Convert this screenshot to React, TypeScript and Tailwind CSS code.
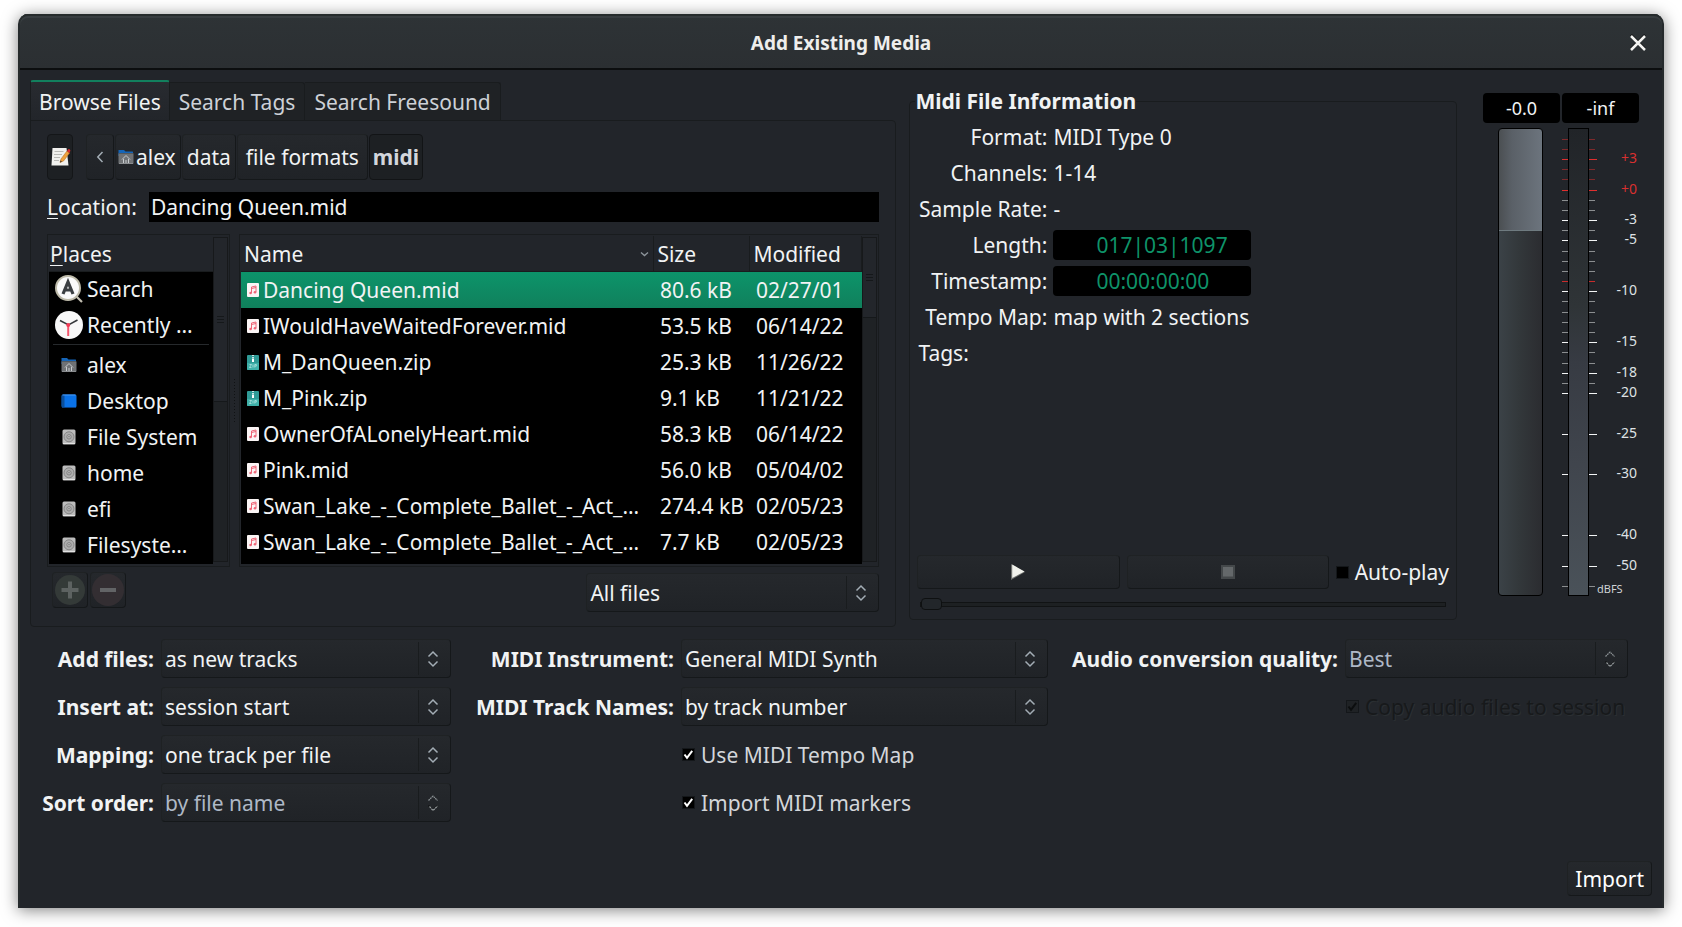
import { useState, type ReactNode } from "react";

const bevel =
  "rounded border border-t-[#1f2224] border-l-[#1e2123] border-r-[#15181a] border-b-[#15181a] bg-linear-to-b from-[#25282c] to-[#202327]";

function UpDown({ disabled }: { disabled?: boolean }) {
  return (
    <svg width="12" height="18" viewBox="0 0 12 18" fill="none" aria-hidden="true">
      {disabled ? (
        <>
          <path d="M1.5 6.500 6 2l4.500 4.500" stroke="#8b9194" strokeWidth="1.200" strokeDasharray="1.800 .6" />
          <path d="M1.500 11.500 6 16l4.500-4.500" stroke="#0f1112" strokeWidth="1.500" />
          <path d="M2.500 12.500 6 16.500 10.500 12" stroke="#969c9f" strokeWidth="1.200" strokeDasharray="2.200 .6" />
        </>
      ) : (
        <path d="M1.500 6.500 6 2l4.500 4.500M1.500 11.500 6 16l4.500-4.500" stroke="#a3adb5" strokeWidth="1.500" />
      )}
    </svg>
  );
}

function Combo({ id, label, options, disabled }: { id: string; label?: string; options: string[]; disabled?: boolean }) {
  return (
    <div className="grid h-[39px] grid-cols-[minmax(0,1fr)_33px]">
      <select
        id={id}
        aria-label={label}
        disabled={disabled}
        className={`${bevel} col-span-2 col-start-1 row-start-1 h-full w-full appearance-none pl-[3px] text-[#f1f3f4] opacity-100 outline-none disabled:text-[#aeb8c6] disabled:opacity-100`}
      >
        {options.map((o) => (
          <option key={o}>{o}</option>
        ))}
      </select>
      <span className="pointer-events-none col-start-2 row-start-1 my-[3px] flex items-center border-l border-[#191c1e] pl-[8px]">
        <UpDown disabled={disabled} />
      </span>
    </div>
  );
}

function Check({ label, checked = false, disabled, dim }: { label: string; checked?: boolean; disabled?: boolean; dim?: boolean }) {
  const [on, setOn] = useState(checked);
  return (
    <label
      className={`flex items-center gap-1.5 ${
        disabled ? "text-[#17191b] [text-shadow:1px_1px_0_#2b2f32]" : dim ? "text-[#d3d6da]" : "text-[#f1f3f4]"
      }`}
    >
      <span className="grid size-[13px] shrink-0">
        <input
          type="checkbox"
          checked={on}
          disabled={disabled}
          onChange={(e) => setOn(e.target.checked)}
          className="col-start-1 row-start-1 size-[13px] appearance-none border border-[#14171a] bg-black disabled:bg-[#1f2225]"
        />
        {on && (
          <svg viewBox="0 0 13 13" className="pointer-events-none col-start-1 row-start-1 size-[13px]" aria-hidden="true">
            <path d="M2.500 6.500 5 9.800 10.200 2.800" fill="none" stroke={disabled ? "#0c0e0f" : "#fff"} strokeWidth="2" />
          </svg>
        )}
      </span>
      {label}
    </label>
  );
}

function HomeFolder() {
  return (
    <svg width="16" height="16" viewBox="0 0 16 16" aria-hidden="true">
      <path d="M.5 1h5.500l1.500 1.500h7q.5 0 .5.500V7H.5z" fill="#1565b8" />
      <rect x=".5" y="4" width="15" height="11" rx="1" fill="#6f7275" />
      <path d="M1 4.500h14" stroke="#55595c" />
      <path d="M1 14.500h14" stroke="#8a8d90" />
      <path d="M4 10.500 8 6.500l4 4M5.500 10v4M10.500 10v4M8 11v3" fill="none" stroke="#c9cccf" />
    </svg>
  );
}

function DesktopIcon() {
  return (
    <svg width="16" height="16" viewBox="0 0 16 16" aria-hidden="true">
      <rect x=".5" y="1.500" width="15" height="13" rx="1.500" fill="#0a72e8" />
      <path d="M1 2h2.500v12H1z" fill="#0b4f9c" />
      <path d="M1.500 2h13" stroke="#4c9af0" />
      <path d="M1 14.500h14" stroke="#0a3f80" />
    </svg>
  );
}

function DriveIcon() {
  return (
    <svg width="16" height="16" viewBox="0 0 16 16" aria-hidden="true">
      <rect x="1.500" y=".5" width="13" height="15" rx="1.500" fill="#bcbcbc" />
      <path d="M2 14.500h12" stroke="#e2e2e2" />
      <circle cx="8" cy="7.800" r="5" fill="#adadad" stroke="#858585" />
      <circle cx="8" cy="7.800" r="2.200" fill="#bdbdbd" stroke="#808080" />
      <circle cx="8" cy="7.800" r=".7" fill="#666" />
    </svg>
  );
}

function SearchPlace() {
  return (
    <svg width="28" height="28" viewBox="0 0 28 28" aria-hidden="true">
      <path d="m21 21 6 6" stroke="#c2bfb2" strokeWidth="2.200" />
      <circle cx="13" cy="13" r="12" fill="#fafafa" stroke="#bdbaa9" strokeWidth="2" />
      <path d="M8 19 13 7l5 12M10 15h6" fill="none" stroke="#3b3f42" strokeWidth="3.200" />
    </svg>
  );
}

function RecentPlace() {
  return (
    <svg width="28" height="28" viewBox="0 0 28 28" aria-hidden="true">
      <circle cx="14" cy="14" r="14" fill="#f8f8f8" />
      <path d="M5 9.500 13.500 14 22.500 9" fill="none" stroke="#34383b" strokeWidth="1.500" />
      <path d="M13.200 13v12" stroke="#f4586f" strokeWidth="2" />
      <circle cx="13.200" cy="14" r="2" fill="#f23a55" />
    </svg>
  );
}

function MidiIcon() {
  return (
    <svg width="12" height="14" viewBox="0 0 12 14" aria-hidden="true">
      <rect width="12" height="14" rx="1" fill="#fbf5f5" />
      <path d="M4.500 10V4l4.500-1v6M4.500 5.500 9 4.500" fill="none" stroke="#ee6678" strokeWidth="1" />
      <circle cx="3.600" cy="10" r="1.300" fill="#ee6678" />
      <circle cx="8" cy="9.200" r="1.300" fill="#ee6678" />
    </svg>
  );
}

function ZipIcon() {
  return (
    <svg width="12" height="15" viewBox="0 0 12 15" aria-hidden="true">
      <rect width="12" height="15" rx="1" fill="#2f9a96" />
      <path d="M0 8h12v6q0 1-1 1H1q-1 0-1-1z" fill="#3fb0a9" />
      <path d="M6 0v3.500" stroke="#fff" strokeDasharray="1 1" strokeWidth="1.500" />
      <rect x="5" y="3.500" width="2" height="3.500" fill="#fff" />
      <path d="M2.500 9.500h2l-2 3h2M6 9.500v3M7.800 12.500v-3h1.500v1.600H8" fill="none" stroke="#b5e6e2" strokeWidth=".8" />
    </svg>
  );
}

function TypeNameIcon() {
  return (
    <svg width="20" height="20" viewBox="0 0 20 20" aria-hidden="true">
      <path d="M1.500 1h14l2 17.500h-17z" fill="#f1f1ee" />
      <path d="M3.500 4.500h9M3 7.500h8M3 10.500h6M3 13.500h5" stroke="#b9b9b5" />
      <path d="m9 15.500 1-3.500 6-8 2.500 2-6 8z" fill="#f0a23c" stroke="#b9742a" strokeWidth=".6" />
      <path d="m16 4 1-1.500q.8-.8 1.800 0 .9.800.4 1.700l-.8 1.700z" fill="#d92a2a" />
      <path d="m9 15.500.6-2 1.400 1z" fill="#3a3128" />
    </svg>
  );
}

const places: { name: string; icon: ReactNode }[] = [
  { name: "alex", icon: <HomeFolder /> },
  { name: "Desktop", icon: <DesktopIcon /> },
  { name: "File System", icon: <DriveIcon /> },
  { name: "home", icon: <DriveIcon /> },
  { name: "efi", icon: <DriveIcon /> },
  { name: "Filesyste…", icon: <DriveIcon /> },
];

const files = [
  ["Dancing Queen.mid", "80.6 kB", "02/27/01"],
  ["IWouldHaveWaitedForever.mid", "53.5 kB", "06/14/22"],
  ["M_DanQueen.zip", "25.3 kB", "11/26/22"],
  ["M_Pink.zip", "9.1 kB", "11/21/22"],
  ["OwnerOfALonelyHeart.mid", "58.3 kB", "06/14/22"],
  ["Pink.mid", "56.0 kB", "05/04/02"],
  ["Swan_Lake_-_Complete_Ballet_-_Act_…", "274.4 kB", "02/05/23"],
  ["Swan_Lake_-_Complete_Ballet_-_Act_…", "7.7 kB", "02/05/23"],
];

function ScrollBar({ short }: { short?: boolean }) {
  return (
    <div className="mt-px mb-0.5 flex w-[15px] shrink-0 flex-col border border-[#17191b] bg-[#1f2225]">
      <div
        className={`${short ? "h-20" : "h-[164px]"} flex flex-col items-center justify-center gap-0.5 border-b border-[#15181a] bg-[#23262b]`}
      >
        <i className="h-px w-[7px] bg-[#15181a]" />
        <i className="h-px w-[7px] bg-[#15181a]" />
        <i className="h-px w-[7px] bg-[#15181a]" />
      </div>
    </div>
  );
}

function Places() {
  return (
    <div className="flex border border-[#191c1e] p-px pb-0.5">
      <div className="flex min-w-0 flex-1 flex-col">
        <div className="h-9 border-b border-[#191c1e] pl-px leading-9">
          <span className="underline decoration-1 underline-offset-[3px]">P</span>laces
        </div>
        <ul className="flex-1 bg-black">
          <li className="flex h-9 items-center gap-1 pb-0.5 pl-[6px]">
            <SearchPlace />
            Search
          </li>
          <li className="flex h-9 items-center gap-1 pb-0.5 pl-[6px]">
            <RecentPlace />
            Recently …
          </li>
          <li className="mx-1 h-1 border-t border-[#26292c]" />
          {places.map((p) => (
            <li key={p.name} className="flex h-9 items-center gap-1 pb-0.5 pl-[6px]">
              <span className="flex w-7 justify-center">{p.icon}</span>
              {p.name}
            </li>
          ))}
        </ul>
      </div>
      <ScrollBar />
    </div>
  );
}

function FileTable() {
  return (
    <div className="flex min-w-0 border border-[#191c1e] p-px pb-0.5">
      <div className="min-w-0 flex-1 bg-black">
        <table className="w-full table-fixed border-collapse text-left whitespace-nowrap">
          <colgroup>
            <col />
            <col className="w-24" />
            <col className="w-28" />
          </colgroup>
          <thead className="bg-[#22252a]">
            <tr className="h-9 shadow-[inset_0_-1px_0_#191c1e]">
              <th className="border-r border-[#191c1e] p-0 pr-1 pl-[3px] font-normal">
                <span className="flex items-center justify-between">
                  Name
                  <svg width="9" height="6" viewBox="0 0 9 6" aria-hidden="true">
                    <path d="m1 1.500 3.500 3 3.500-3" fill="none" stroke="#8d959b" strokeWidth="1.400" />
                  </svg>
                </span>
              </th>
              <th className="border-r border-[#191c1e] p-0 pl-[3px] font-normal">Size</th>
              <th className="border-r border-[#191c1e] p-0 pl-[3px] font-normal">Modified</th>
            </tr>
          </thead>
          <tbody>
            {files.map(([name, size, date], i) => (
              <tr key={i} className={`h-9 ${i === 0 ? "bg-linear-to-b from-[#0c946a] to-[#10805c]" : ""}`}>
                <td className="p-0 pl-1.5">
                  <span className="flex items-center gap-1">
                    {name.endsWith(".zip") ? <ZipIcon /> : <MidiIcon />}
                    {name}
                  </span>
                </td>
                <td className="p-0 pl-[6px]">{size}</td>
                <td className="p-0 pl-[6px]">{date}</td>
              </tr>
            ))}
          </tbody>
        </table>
      </div>
      <ScrollBar short />
    </div>
  );
}

function Browser() {
  return (
    <section className="flex min-w-0 flex-col">
      <div role="tablist" className="flex items-end">
        <button
          role="tab"
          aria-selected="true"
          className="-mb-px h-[41px] rounded-t-[3px] border-x border-t-2 border-x-[#191c1e] border-t-[#12805e] bg-linear-to-b from-[#282b30] to-[#22252a] px-2"
        >
          Browse Files
        </button>
        <button role="tab" aria-selected="false" className="h-[38px] rounded-tr-[3px] border-t border-r border-[#191c1e] bg-[#1f2225] px-[9px] text-[#cdd1d7]">
          Search Tags
        </button>
        <button role="tab" aria-selected="false" className="h-[38px] rounded-tr-[3px] border-t border-r border-[#191c1e] bg-[#1f2225] px-[9px] text-[#cdd1d7]">
          Search Freesound
        </button>
      </div>
      <div className="flex-1 rounded-r-[4px] rounded-bl-[4px] border border-[#191c1e] px-4 pt-[13px] pb-[14px]">
        <div className="flex h-[46px]">
          <button
            aria-label="Type a file name"
            className="mr-[13px] flex w-[26px] items-center justify-end rounded border border-[#141618] bg-[#1d2023] pr-px"
          >
            <TypeNameIcon />
          </button>
          <nav className="flex gap-px">
            <button aria-label="Back" className={`${bevel} flex w-7 items-center justify-center`}>
              <svg width="8" height="12" viewBox="0 0 8 12" aria-hidden="true">
                <path d="M6.500 1 1.800 6l4.700 5" fill="none" stroke="#a3adb5" strokeWidth="1.500" />
              </svg>
            </button>
            <button className={`${bevel} flex items-center gap-0.5 pr-1 pl-0.5`}>
              <HomeFolder />
              alex
            </button>
            <button className={`${bevel} px-1`}>data</button>
            <button className={`${bevel} px-2`}>file formats</button>
            <button className="rounded border border-[#121416] bg-[#1d2023] px-[3px] font-bold text-[#d3d6dc]">midi</button>
          </nav>
        </div>
        <div className="mt-3 flex h-[30px] items-center gap-3">
          <label htmlFor="location">
            <span className="underline decoration-1 underline-offset-[3px]">L</span>ocation:
          </label>
          <input id="location" defaultValue="Dancing Queen.mid" className="h-full min-w-0 flex-1 bg-black px-0.5 text-[#f1f3f4] outline-none" />
        </div>
        <div className="mt-3 grid grid-cols-[183px_9px_minmax(0,1fr)]">
          <Places />
          <div className="flex items-center justify-center">
            <i className="h-[46px] w-[3px] bg-[radial-gradient(#101214_35%,transparent_40%)] bg-size-[3px_3px]" />
          </div>
          <FileTable />
        </div>
        <div className="mt-[5px] flex items-start justify-between">
          <div className="flex gap-0.5 pl-[5px]">
            <button disabled aria-label="Add place" className={`${bevel} flex size-9 items-center justify-center`}>
              <svg width="32" height="32" viewBox="0 0 32 32" className="shrink-0" aria-hidden="true">
                <circle cx="16" cy="16" r="15" fill="#343a38" />
                <path d="M16 7.500v17M7.500 16h17" stroke="#5d6261" strokeWidth="4" />
              </svg>
            </button>
            <button disabled aria-label="Remove place" className={`${bevel} flex size-9 items-center justify-center`}>
              <svg width="32" height="32" viewBox="0 0 32 32" className="shrink-0" aria-hidden="true">
                <circle cx="16" cy="16" r="16" fill="#332e32" />
                <path d="M8 16h16" stroke="#626466" strokeWidth="4" />
              </svg>
            </button>
          </div>
          <div className="mt-px w-[293px]">
            <Combo id="filter" label="File filter" options={["All files", "Audio and MIDI files"]} />
          </div>
        </div>
      </div>
    </section>
  );
}

const info: [string, string, boolean?][] = [
  ["Format:", "MIDI Type 0"],
  ["Channels:", "1-14"],
  ["Sample Rate:", "-"],
  ["Length:", "017|03|1097", true],
  ["Timestamp:", "00:00:00:00", true],
  ["Tempo Map:", "map with 2 sections"],
];

function MidiInfo() {
  return (
    <section className="mt-[6px] flex min-w-0 flex-col pb-[7px]">
      <fieldset className="flex min-w-0 flex-1 flex-col rounded-[4px] border border-[#191c1e] px-[7px] pb-[9px]">
        <legend className="-ml-[2px] h-[30px] font-bold">Midi File Information</legend>
        <dl className="mt-[6px] grid grid-cols-[130px_minmax(0,1fr)] gap-x-1.5 gap-y-1.5">
          {info.map(([k, v, clock]) => (
            <div key={k} className="col-span-2 grid h-[30px] grid-cols-subgrid items-center">
              <dt className="text-right whitespace-nowrap">{k}</dt>
              {clock ? (
                <dd className="h-[30px] w-[198px] rounded-[4px] bg-black pl-[43px] leading-[30px] text-[#0e9369]">{v}</dd>
              ) : (
                <dd>{v}</dd>
              )}
            </div>
          ))}
          <dt className="h-[30px] pl-px leading-[30px]">Tags:</dt>
        </dl>
        <div className="mt-auto flex h-[34px] items-center gap-[7px]">
          <button aria-label="Play" className={`${bevel} flex h-full flex-1 items-center justify-center`}>
            <svg width="16" height="18" viewBox="0 0 16 18" aria-hidden="true">
              <path d="M1 1v16l14-8z" fill="#6d6f6d" />
              <path d="M2.200 1.500v13.500L14.500 8.500z" fill="#f1f2ec" />
            </svg>
          </button>
          <button disabled aria-label="Stop" className={`${bevel} flex h-full flex-1 items-center justify-center`}>
            <svg width="14" height="14" viewBox="0 0 14 14" aria-hidden="true">
              <path d="M0 0h14v14H0z" fill="#44484a" />
              <path d="M2 2h10v9.500H2z" fill="#64686a" />
            </svg>
          </button>
          <Check label="Auto-play" />
        </div>
        <input
          type="range"
          aria-label="Playback position"
          defaultValue={0}
          className="mx-[3px] mt-[9px] h-3 appearance-none bg-transparent [&::-webkit-slider-runnable-track]:h-[5px] [&::-webkit-slider-runnable-track]:border [&::-webkit-slider-runnable-track]:border-[#111314] [&::-webkit-slider-runnable-track]:bg-[#1d2022] [&::-webkit-slider-thumb]:-mt-[5px] [&::-webkit-slider-thumb]:h-3 [&::-webkit-slider-thumb]:w-[21px] [&::-webkit-slider-thumb]:appearance-none [&::-webkit-slider-thumb]:rounded-[4px] [&::-webkit-slider-thumb]:border [&::-webkit-slider-thumb]:border-[#0e1011] [&::-webkit-slider-thumb]:bg-[#22262a]"
        />
      </fieldset>
    </section>
  );
}

const ticks: [number, string][] = [
  [11, "r"], [21, "r"], [31, "R"], [41, "r"], [51, "r"], [62, "R"], [72, "w"], [82, "w"], [92, "W"], [102, "w"],
  [112, "W"], [123, "w"], [133, "w"], [143, "w"], [153, "s"], [163, "W"], [173, "w"], [184, "w"], [194, "w"], [204, "w"],
  [214, "W"], [224, "w"], [235, "w"], [245, "W"], [255, "w"], [265, "W"], [306, "W"], [346, "W"], [407, "W"], [438, "W"],
  [458, "w"],
];
const tickColor: Record<string, string> = { r: "#7d2a2c", R: "#e02f2f", s: "#c92c2c", w: "#8b8e90", W: "#f4f5f6" };
const marks: [number, string][] = [
  [31, "+3"], [62, "+0"], [92, "-3"], [112, "-5"], [163, "-10"], [214, "-15"], [245, "-18"], [265, "-20"], [306, "-25"],
  [346, "-30"], [407, "-40"], [438, "-50"],
];

function Meter() {
  return (
    <svg width="77" height="468" viewBox="0 0 77 468" role="img" aria-label="Level meter in dBFS">
      <defs>
        <linearGradient id="level" x1="0" y1="0" x2="0" y2="1">
          <stop offset="0" stopColor="#212428" />
          <stop offset=".38" stopColor="#2f3437" />
          <stop offset=".5" stopColor="#373b43" />
          <stop offset=".72" stopColor="#40454d" />
          <stop offset="1" stopColor="#4a5259" />
        </linearGradient>
      </defs>
      {ticks.map(([y, kind]) => (
        <g key={y} fill={tickColor[kind]}>
          <rect x="0" y={y} width="6" height="1" />
          <rect x="27" y={y} width={kind === "R" || kind === "W" ? 8 : 6} height="1" />
        </g>
      ))}
      <rect x="6.500" y=".5" width="20" height="467" fill="url(#level)" stroke="#000" />
      {marks.map(([y, t]) => (
        <text key={t} x="75" y={y + 4} textAnchor="end" fontSize="14" fill={t[0] === "+" ? "#d9302f" : "#dfe2e4"}>
          {t}
        </text>
      ))}
      <text x="35" y="465" fontSize="11" fill="#d0d3d5">
        dBFS
      </text>
    </svg>
  );
}

function Levels() {
  return (
    <section className="mt-[13px]">
      <div className="flex gap-0.5 text-[18px] leading-[30px]">
        <button className="h-[30px] flex-1 rounded-[4px] bg-black">-0.0</button>
        <button className="h-[30px] flex-1 rounded-[4px] bg-black">-inf</button>
      </div>
      <div className="mt-[5px] flex justify-end gap-[19px]">
        <input
          type="range"
          aria-label="Gain"
          defaultValue={78}
          className="h-[468px] w-[45px] appearance-none rounded-[4px] border border-black bg-[linear-gradient(to_right,#4b4f52,#5a6067_30%,#6c747d),linear-gradient(#6f7b80,#6f7b80),linear-gradient(to_right,#3b4247,#33383b_45%,#2b2c30)] bg-size-[100%_101px,100%_102px,100%_100%] bg-no-repeat [direction:rtl] [writing-mode:vertical-lr] [&::-webkit-slider-thumb]:appearance-none [&::-webkit-slider-thumb]:opacity-0"
        />
        <Meter />
      </div>
    </section>
  );
}

function FieldLabel({ htmlFor, children }: { htmlFor: string; children: ReactNode }) {
  return (
    <label htmlFor={htmlFor} className="text-right font-bold whitespace-nowrap">
      {children}
    </label>
  );
}

function Options() {
  return (
    <section className="mt-3 grid grid-cols-[124px_minmax(0,290fr)_216px_minmax(0,367fr)_283px_minmax(0,283fr)] items-center gap-x-[7px] gap-y-[9px] pr-6">
      <FieldLabel htmlFor="add">Add files:</FieldLabel>
      <Combo id="add" options={["as new tracks", "to region list"]} />
      <FieldLabel htmlFor="inst">MIDI Instrument:</FieldLabel>
      <Combo id="inst" options={["General MIDI Synth"]} />
      <FieldLabel htmlFor="quality">Audio conversion quality:</FieldLabel>
      <Combo id="quality" options={["Best", "Good"]} disabled />

      <FieldLabel htmlFor="insert">Insert at:</FieldLabel>
      <Combo id="insert" options={["session start", "playhead"]} />
      <FieldLabel htmlFor="names">MIDI Track Names:</FieldLabel>
      <Combo id="names" options={["by track number", "by track name"]} />
      <div className="col-start-6 pl-px whitespace-nowrap">
        <Check label="Copy audio files to session" checked disabled />
      </div>

      <FieldLabel htmlFor="mapping">Mapping:</FieldLabel>
      <Combo id="mapping" options={["one track per file", "sequence files"]} />
      <div className="col-start-4 pl-px">
        <Check label="Use MIDI Tempo Map" checked dim />
      </div>

      <div className="col-start-1 flex justify-end">
        <FieldLabel htmlFor="sort">Sort order:</FieldLabel>
      </div>
      <Combo id="sort" options={["by file name", "by modification time"]} disabled />
      <div className="col-start-4 pl-px">
        <Check label="Import MIDI markers" checked dim />
      </div>
    </section>
  );
}

export default function App() {
  return (
    <main className="flex min-h-screen bg-white px-[18px] pt-3.5 pb-[19px] font-['Noto_Sans',sans-serif] text-[21px] leading-[30px] text-[#f1f3f4]">
      <div className="flex min-w-0 flex-1 flex-col rounded-t-[10px] border-x-2 border-[#252a2c] bg-[#22252a] shadow-[0_2px_16px_rgba(0,0,0,0.5)]">
        <header className="grid h-[56px] shrink-0 grid-cols-[1fr_auto_1fr] items-center rounded-t-[8px] border-b-2 border-[#0c0e0f] bg-linear-to-b from-[#2e3336] to-[#2b2f32] pt-[3px] shadow-[inset_0_2px_0_#262b2c,inset_0_4px_0_#383d40]">
          <h1 className="col-start-2 text-[19px] font-bold text-[#eeeeec]">Add Existing Media</h1>
          <button aria-label="Close" className="mr-[14px] justify-self-end">
            <svg width="20" height="20" viewBox="0 0 20 20" aria-hidden="true">
              <path d="m3 2 14 14M17 2 3 16" stroke="#0e1011" strokeWidth="2.500" />
              <path d="m3 3 14 14M17 3 3 17" stroke="#f4f4f2" strokeWidth="2.500" />
            </svg>
          </button>
        </header>
        <div className="flex flex-1 flex-col pt-[10px] pr-2.5 pb-3 pl-2.5">
          <div className="grid grid-cols-[minmax(0,867fr)_minmax(0,587fr)_156px] pr-[13px]">
            <Browser />
            <div className="flex pr-[26px] pl-[13px] [&>section]:flex-1">
              <MidiInfo />
            </div>
            <Levels />
          </div>
          <Options />
          <button className={`${bevel} mt-auto h-[35px] self-end px-[7px] text-white`}>Import</button>
        </div>
      </div>
    </main>
  );
}
